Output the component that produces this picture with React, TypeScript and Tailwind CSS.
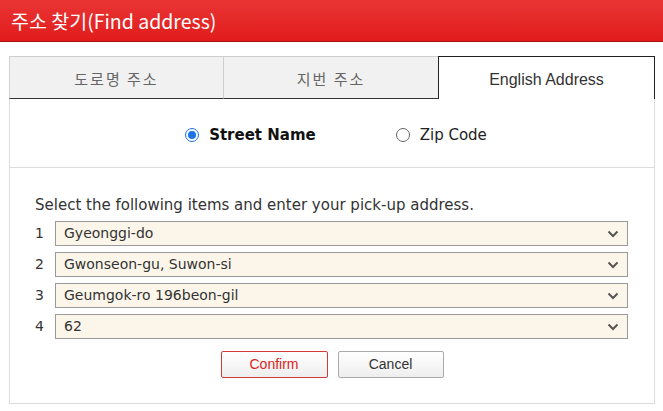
import React from 'react';

const rows = ['Gyeonggi-do', 'Gwonseon-gu, Suwon-si', 'Geumgok-ro 196beon-gil', '62'];

function Chevron() {
  return (
    <svg width="12" height="8" viewBox="0 0 12 8" className="shrink-0">
      <path d="M1.5 1.5 L6 6 L10.5 1.5" fill="none" stroke="#555" strokeWidth="2" />
    </svg>
  );
}

export default function App() {
  return (
    <div className="w-[663px] h-[411px] bg-white overflow-hidden" style={{ fontFamily: '"DejaVu Sans", sans-serif' }}>
      <div className="h-[42px] bg-gradient-to-b from-[#e93434] to-[#e11a1a] border-b border-[#a51212] flex items-center pl-[11px]">
        <span className="text-white text-[19.5px] leading-none" style={{ fontFamily: '"Noto Sans CJK KR", sans-serif' }}>
          주소 찾기(Find address)
        </span>
      </div>

      <div className="px-[9px] pt-[14px]">
        <div className="flex h-[43px] w-[646px]">
          <div className="w-[214px] bg-[#f1f1f1] border-t border-l border-[#cfcfcf] border-b border-b-[#333] flex items-center justify-center pt-[4px] text-[15px] text-[#666] tracking-[2px]" style={{ fontFamily: '"Noto Sans CJK KR", sans-serif' }}>
            도로명 주소
          </div>
          <div className="w-[215px] bg-[#f1f1f1] border-t border-l border-[#cfcfcf] border-b border-b-[#333] flex items-center justify-center pt-[4px] text-[15px] text-[#666] tracking-[2px]" style={{ fontFamily: '"Noto Sans CJK KR", sans-serif' }}>
            지번 주소
          </div>
          <div className="w-[217px] bg-white border-t border-l border-r border-[#222] flex items-center justify-center pt-[4px] text-[16px] text-[#333]" style={{ fontFamily: '"Liberation Sans", sans-serif' }}>
            English Address
          </div>
        </div>

        <div className="w-[646px] h-[305px] border-l border-r border-b border-[#dcdcdc]">
          <div className="h-[69px] border-b border-[#dcdcdc] flex items-center justify-center gap-[80px] text-[15px] pt-[4px] pl-[8px]">
            <div className="flex items-center gap-[10px]">
              <span className="w-[14px] h-[14px] rounded-full border-[1.5px] border-[#1a73e8] flex items-center justify-center">
                <span className="w-[8px] h-[8px] rounded-full bg-[#1a73e8]" />
              </span>
              <span className="font-bold text-[#111]">Street Name</span>
            </div>
            <div className="flex items-center gap-[10px]">
              <span className="w-[14px] h-[14px] rounded-full border border-[#666] bg-white" />
              <span className="text-[#222]">Zip Code</span>
            </div>
          </div>

          <div className="pl-[25px] pt-[28px]">
            <div className="text-[15px] text-[#333] leading-[18px]">Select the following items and enter your pick-up address.</div>
            <div className="mt-[7px] flex flex-col gap-[6px]">
              {rows.map((r, i) => (
                <div key={r} className="flex items-center">
                  <span className="w-[20px] text-[14px] text-[#333]">{i + 1}</span>
                  <div className="w-[573px] h-[25px] bg-[#fcf6ea] border border-[#9a9a9a] flex items-center justify-between pl-[8px] pr-[8px] text-[14px] text-[#333]">
                    <span>{r}</span>
                    <Chevron />
                  </div>
                </div>
              ))}
            </div>
          </div>

          <div className="mt-[12px] flex justify-center gap-[10px]" style={{ fontFamily: '"Liberation Sans", sans-serif' }}>
            <button className="w-[107px] h-[27px] border border-[#d33a3a] bg-gradient-to-b from-white to-[#eeeeee] text-[14px] text-[#d22] rounded-[2px]">
              Confirm
            </button>
            <button className="w-[106px] h-[27px] border border-[#aaa] bg-gradient-to-b from-white to-[#eeeeee] text-[14px] text-[#333] rounded-[2px]">
              Cancel
            </button>
          </div>
        </div>
      </div>
    </div>
  );
}
